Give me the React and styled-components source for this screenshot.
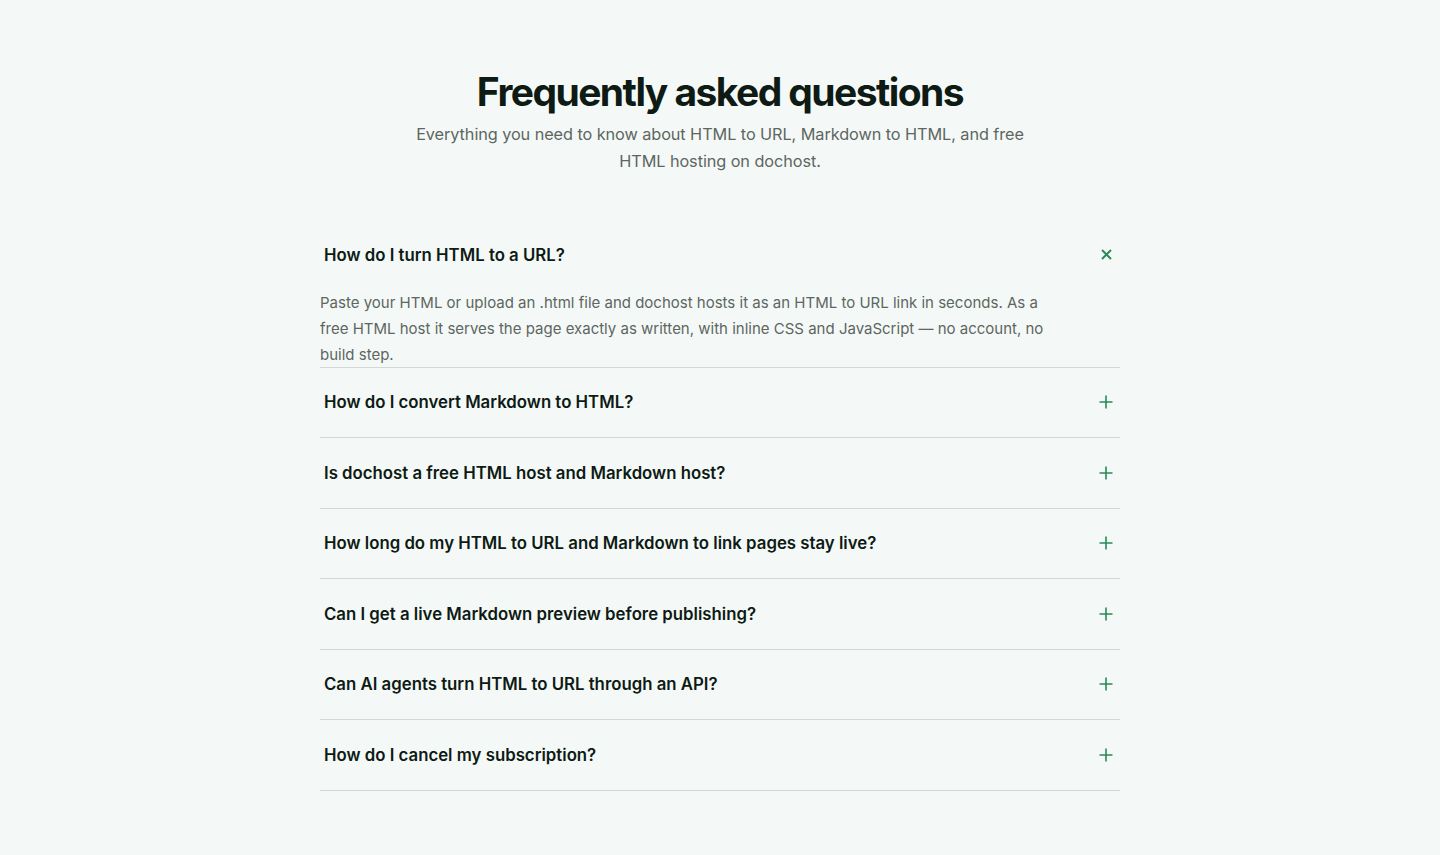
import React, { useState } from "react"
import styled, { createGlobalStyle } from "styled-components"

const colors = {
  bg: "#f4f9f7",
  ink: "#0e1a14",
  body: "#5d6661",
  line: "#d3d8d5",
  green: "#2a8a55",
}

const GlobalStyle = createGlobalStyle`
  * { box-sizing: border-box; }
  html, body {
    margin: 0;
    background: ${colors.bg};
    font-family: Inter, "Noto Sans", sans-serif;
    color: ${colors.ink};
  }
`

const Section = styled.section`
  min-height: 855px;
  padding: 70px 0 60px;
  display: flex;
  flex-direction: column;
  align-items: center;
`

const Header = styled.header`
  display: flex;
  flex-direction: column;
  align-items: center;
  text-align: center;
  margin-bottom: 45px;
`

const Title = styled.h2`
  margin: 0;
  font-size: 39px;
  line-height: 44px;
  font-weight: 700;
  letter-spacing: -0.04em;
  color: ${colors.ink};
`

const Subtitle = styled.p`
  margin: 7px 0 0;
  max-width: 630px;
  font-size: 16.3px;
  line-height: 27px;
  color: ${colors.body};
  letter-spacing: -0.005em;
`

const List = styled.div`
  width: 800px;
  display: flex;
  flex-direction: column;
`

const Item = styled.div`
  border-bottom: 1px solid ${colors.line};
`

const Trigger = styled.button`
  width: 100%;
  height: 69.5px;
  display: flex;
  align-items: center;
  justify-content: space-between;
  padding: 0 4px;
  background: none;
  border: 0;
  cursor: pointer;
  font-family: inherit;
  text-align: left;
`

const Question = styled.span`
  font-size: 16.8px;
  font-weight: 600;
  color: ${colors.ink};
`

const IconWrap = styled.span`
  width: 20px;
  height: 20px;
  display: flex;
  align-items: center;
  justify-content: center;
  color: ${colors.green};
`

const Answer = styled.p`
  margin: 0;
  padding: 0 70px 0 0;
  font-size: 15px;
  line-height: 26px;
  height: 77px;
  color: ${colors.body};
`

function PlusIcon() {
  return (
    <svg width="14" height="14" viewBox="0 0 14 14" fill="none" stroke="currentColor" strokeWidth="1.6">
      <path d="M7 0.5v13M0.5 7h13" />
    </svg>
  )
}

function CloseIcon() {
  return (
    <svg width="11" height="11" viewBox="0 0 11 11" fill="none" stroke="currentColor" strokeWidth="2">
      <path d="M1 1l9 9M10 1l-9 9" />
    </svg>
  )
}

const faqs = [
  {
    q: "How do I turn HTML to a URL?",
    a: "Paste your HTML or upload an .html file and dochost hosts it as an HTML to URL link in seconds. As a free HTML host it serves the page exactly as written, with inline CSS and JavaScript — no account, no build step.",
  },
  { q: "How do I convert Markdown to HTML?", a: "Paste or upload Markdown and dochost renders it to clean HTML you can share as a link." },
  { q: "Is dochost a free HTML host and Markdown host?", a: "Yes. Publishing HTML and Markdown pages is free." },
  { q: "How long do my HTML to URL and Markdown to link pages stay live?", a: "Pages stay live until you delete them." },
  { q: "Can I get a live Markdown preview before publishing?", a: "Yes, the editor shows a live preview as you type." },
  { q: "Can AI agents turn HTML to URL through an API?", a: "Yes, agents can publish pages through the dochost API." },
  { q: "How do I cancel my subscription?", a: "You can cancel any time from your account settings." },
]

export default function App() {
  const [open, setOpen] = useState(0)

  return (
    <>
      <GlobalStyle />
      <Section>
        <Header>
          <Title>Frequently asked questions</Title>
          <Subtitle>
            Everything you need to know about HTML to URL, Markdown to HTML, and free HTML hosting on dochost.
          </Subtitle>
        </Header>
        <List>
          {faqs.map((item, i) => {
            const isOpen = open === i
            return (
              <Item key={item.q}>
                <Trigger onClick={() => setOpen(isOpen ? -1 : i)} aria-expanded={isOpen}>
                  <Question>{item.q}</Question>
                  <IconWrap>{isOpen ? <CloseIcon /> : <PlusIcon />}</IconWrap>
                </Trigger>
                {isOpen && <Answer>{item.a}</Answer>}
              </Item>
            )
          })}
        </List>
      </Section>
    </>
  )
}
